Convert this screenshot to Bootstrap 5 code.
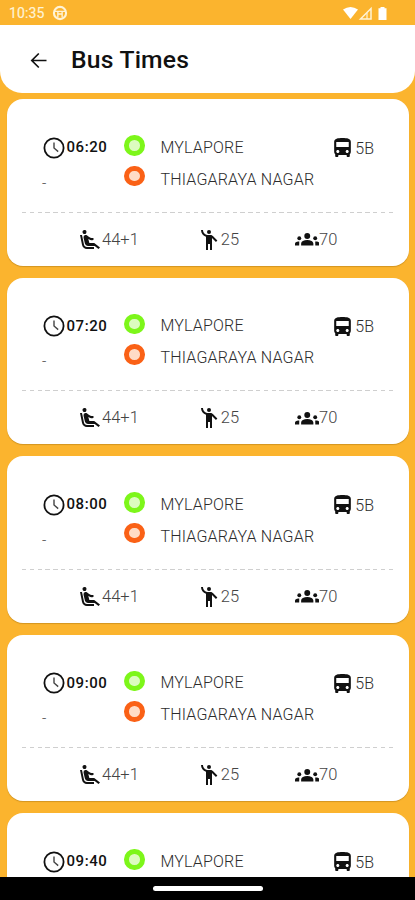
<!DOCTYPE html>
<html lang="en">
<head>
<meta charset="utf-8">
<meta name="viewport" content="width=device-width, initial-scale=1">
<title>Bus Times</title>
<link href="https://cdn.jsdelivr.net/npm/bootstrap@5.3.0/dist/css/bootstrap.min.css" rel="stylesheet">
<style>
  body { font-family: Roboto, sans-serif; color: #111; }
  .screen { height: 900px; background: #fbb42e; }
  .status { height: 25px; padding: 1px 27px 0 9px; color: #fff3d6; font-size: 14px; letter-spacing: .1px; -webkit-text-stroke: .2px #fff3d6; }
  .topbar { height: 68.3px; border-radius: 0 0 22px 22px; padding: 3px 0 0 27px; }
  .topbar h1 { font-size: 24.7px; font-weight: 500; margin-left: 20px; color: #111; line-height: 1; letter-spacing: .2px; }
  .trips { padding: 6px 6px 0 6.5px; gap: 12px; }
  .trip { flex: 0 0 166.5px; height: 166.5px; border-radius: 16px; box-shadow: 0 1px 1px rgba(120,80,0,.3); padding: 32.3px 15px 0; }
  .trip-main { height: 80px; padding: 0 20px 0 21.5px; }
  .when { width: 81px; }
  .clock-line { height: 32px; }
  .time { font-size: 15px; font-weight: 500; letter-spacing: .55px; color: #111; margin-left: 1.5px; }
  .no-arrival { padding: 3px 0 0 0; margin-left: -1px; color: #444 !important; font-size: 15px !important; }
  .stops { width: 20px; padding-top: 3.5px; gap: 10px; }
  .dot { width: 20.5px; height: 20.5px; border-radius: 50%; border: 5.5px solid #7df61a; background: #dcfcc0; }
  .dot-end { border-color: #fa6116; background: #ffdcc6; }
  .thin { font-size: 16px; font-weight: 300; color: #2c2c2c; line-height: 32px; white-space: nowrap; }
  .names { margin-left: 16.5px; letter-spacing: .18px; }
  .route span { padding-top: 1px; }
  .divider { height: 1px; background: repeating-linear-gradient(90deg, #cfcfcf 0 4.4px, transparent 4.4px 7.8px); }
  .seats { height: 54px; }
  .seats .thin { font-size: 16.5px; color: #444; }
  .seats svg, .route svg { color: #111; fill: #111; }
  .cell-a { width: 118px; padding-left: 56.5px; }
  .cell-b { width: 155px; padding-left: 57.3px; }
  .gesture { height: 23px; background: #000; }
  .pill { width: 110px; height: 4.5px; border-radius: 3px; background: #fff; }
</style>
<script src="https://cdn.jsdelivr.net/npm/bootstrap@5.3.0/dist/js/bootstrap.bundle.min.js"></script>
</head>
<body>
<svg class="d-none" aria-hidden="true">
  <symbol id="clock" viewBox="0 0 22 22"><circle cx="11" cy="11" r="9.6" fill="none" stroke="#111" stroke-width="1.8"/><path d="M11 5.5V11l4.2 3.6" fill="none" stroke="#444" stroke-width="1.4"/></symbol>
  <symbol id="bus" viewBox="0 0 24 24" preserveAspectRatio="none"><path d="M4 16c0 .88.39 1.67 1 2.22V20c0 .55.45 1 1 1h1c.55 0 1-.45 1-1v-1h8v1c0 .55.45 1 1 1h1c.55 0 1-.45 1-1v-1.78c.61-.55 1-1.34 1-2.22V6c0-3.5-3.58-4-8-4s-8 .5-8 4v10zm3.5 1c-.83 0-1.5-.67-1.5-1.5S6.67 14 7.5 14s1.5.67 1.5 1.5S8.33 17 7.5 17zm9 0c-.83 0-1.5-.67-1.5-1.5s.67-1.5 1.5-1.5 1.5.67 1.5 1.5-.67 1.5-1.5 1.5zm1.5-6H6V6h12v5z"/></symbol>
  <symbol id="seat" viewBox="0 0 24 24"><path d="M5.35 5.64c-.9-.64-1.12-1.88-.49-2.79.63-.9 1.88-1.12 2.79-.49.9.64 1.12 1.88.49 2.79-.64.9-1.88 1.12-2.79.49zM16 19H8.93c-1.48 0-2.74-1.08-2.96-2.54L4 7H2l1.99 9.76C4.37 19.2 6.47 21 8.94 21H16v-2zm.23-4h-4.88l-1.03-4.1c1.58.89 3.28 1.54 5.15 1.22V9.99c-1.63.31-3.44-.27-4.69-1.25L9.14 7.47c-.23-.18-.49-.3-.76-.38a2.21 2.21 0 0 0-.99-.06h-.02a2.268 2.268 0 0 0-1.84 2.61l1.35 5.92A3.008 3.008 0 0 0 9.83 18h6.85l3.82 3 1.5-1.5-5.77-4.5z"/></symbol>
  <symbol id="person" viewBox="0 0 24 24"><circle cx="12" cy="4" r="2"/><path d="M15.89 8.11C15.5 7.72 14.83 7 13.53 7h-2.54C8.24 6.99 6 4.75 6 2H4c0 3.16 2.11 5.84 5 6.71V22h2v-6h2v6h2V10.05L18.95 14l1.41-1.41-4.47-4.48z"/></symbol>
  <symbol id="group" viewBox="0 0 24 24"><circle cx="12" cy="8.8" r="2.9"/><path d="M12 12.75c1.63 0 3.07.39 4.24.9 1.08.48 1.76 1.56 1.76 2.73V18H6v-1.61c0-1.18.68-2.26 1.76-2.73 1.17-.52 2.61-.91 4.24-.91z"/><circle cx="4.200" cy="11" r="1.900"/><circle cx="19.800" cy="11" r="1.900"/><path d="M4.200 14.200C2 13.800 0 14.700 0 16.430V18h4.100zM19.800 14.200c2.200-.4 4.200.5 4.200 2.230V18h-4.100z"/></symbol>
</svg>
<template id="trip-template">
  <article class="trip bg-white">
    <div class="trip-main d-flex align-items-start">
      <div class="when">
        <div class="clock-line d-flex align-items-center"><svg width="22" height="22"><use href="#clock"/></svg><span class="time"></span></div>
        <div class="thin no-arrival below">-</div>
      </div>
      <div class="stops d-flex flex-column"><span class="dot"></span><span class="dot dot-end below"></span></div>
      <div class="names thin"><div>MYLAPORE</div><div class="below">THIAGARAYA NAGAR</div></div>
      <div class="route ms-auto d-flex align-items-center thin"><svg width="25" height="24"><use href="#bus"/></svg><span>5B</span></div>
    </div>
    <div class="divider below"></div>
    <div class="seats d-flex align-items-center below">
      <div class="cell-a d-flex align-items-center thin"><svg class="flex-shrink-0" width="24" height="24"><use href="#seat"/></svg><span>44+1</span></div>
      <div class="cell-b d-flex align-items-center thin"><svg class="flex-shrink-0" width="24" height="24"><use href="#person"/></svg><span>25</span></div>
      <div class="d-flex align-items-center thin"><svg class="flex-shrink-0" width="24.5" height="24.5"><use href="#group"/></svg><span>70</span></div>
    </div>
  </article>
</template>
<div class="screen d-flex flex-column overflow-hidden">
  <div class="status d-flex align-items-center flex-shrink-0">
    <span>10:35</span>
    <svg class="ms-2" width="16" height="16" viewBox="0 0 15 15"><circle cx="7.5" cy="7.5" r="5.7" fill="none" stroke="#fff3d6" stroke-width="2"/><path d="M2.500 6h10M5 8.500h5M5.500 6.500v5M9.500 6.500v5" stroke="#fff3d6" stroke-width="1.300"/></svg>
    <svg class="ms-auto" width="46" height="15" viewBox="0 0 46 15"><path d="M1 3.5Q8.500-1.500 16 3.500L8.500 13z" fill="#fff"/><path d="M18.500 13H29V2.500z" fill="none" stroke="#fff3d6" stroke-width="1.500"/><path d="M25 7v6" stroke="#fff3d6" stroke-width="1.200"/><path d="M38.500 1h4v1.300h2V14h-8V2.300h2z" fill="#fff"/></svg>
  </div>
  <header class="topbar bg-white d-flex align-items-center flex-shrink-0">
    <svg width="24" height="24" viewBox="0 0 24 24"><path d="M19.500 11.500H5M11.800 4.500l-7 7 7 7" fill="none" stroke="#111" stroke-width="1.700"/></svg>
    <h1 class="mb-0">Bus Times</h1>
  </header>
  <main id="trips" class="trips d-flex flex-column flex-grow-1 overflow-hidden"></main>
  <footer class="gesture d-flex justify-content-center align-items-center flex-shrink-0"><div class="pill"></div></footer>
</div>
<script>
  const list = document.getElementById('trips');
  const template = document.getElementById('trip-template');
  const times = ['06:20', '07:20', '08:00', '09:00', '09:40'];
  times.forEach((time, i) => {
    const card = template.content.cloneNode(true);
    card.querySelector('.time').textContent = time;
    // The last card only peeks in, so its lower rows stay unrendered.
    if (i === times.length - 1) card.querySelectorAll('.below').forEach(el => el.remove());
    list.appendChild(card);
  });
</script>
</body>
</html>
